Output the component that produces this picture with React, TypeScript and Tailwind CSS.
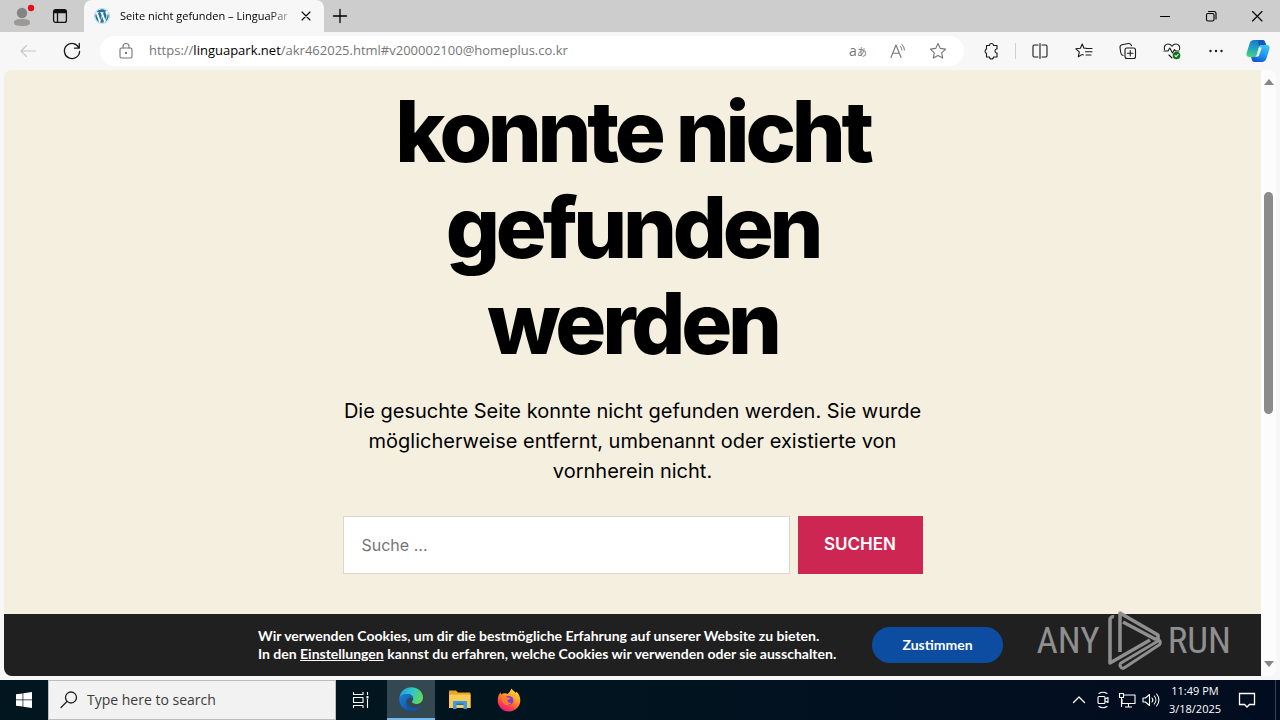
import React from "react";
import { FaWordpress } from "react-icons/fa";

type IconProps = {
  children: React.ReactNode;
  className?: string;
  box?: string;
};

// Thin line icon used all over the browser chrome
function Icon({ children, className = "size-5", box = "0 0 20 20" }: IconProps) {
  return (
    <svg
      viewBox={box}
      className={`shrink-0 ${className}`}
      fill="none"
      stroke="currentColor"
      strokeWidth="1.1"
      strokeLinecap="round"
      strokeLinejoin="round"
      aria-hidden="true"
    >
      {children}
    </svg>
  );
}

function TitleBar() {
  return (
    <header className="flex h-8 shrink-0 items-stretch bg-[#cdcdcd]">
      <button aria-label="Profile" className="ml-3 flex w-6 items-center">
        <svg viewBox="0 0 24 24" className="size-6" aria-hidden="true">
          <circle cx="10" cy="9" r="5.2" fill="#868482" />
          <path d="M2 18.500c0-2.800 3-3.500 8-3.500s8 .7 8 3.500S15 22 10 22s-8-.9-8-3.500z" fill="#9b9998" />
          <circle cx="19" cy="4" r="3.200" fill="#e0101c" />
        </svg>
      </button>
      <button aria-label="Tab actions" className="ml-4 flex w-4 items-center">
        <svg viewBox="0 0 16 16" className="size-4" fill="none" stroke="#111" strokeWidth="1.300" aria-hidden="true">
          <rect x="1.600" y="1.600" width="12.800" height="12.800" rx="2" />
          <path d="M1.600 4.600h12.800M5.500 4.600v9.800" />
          <path d="M2 3h12" strokeWidth="2" />
        </svg>
      </button>
      <div className="ml-4 flex w-60 items-center rounded-t-lg bg-[#f7f7f7] px-[10px]">
        <FaWordpress className="size-4 shrink-0 rounded-full bg-white text-[#21759b]" />
        <span className="ml-[10px] w-[174px] bg-linear-to-r from-black from-86% to-black/15 bg-clip-text text-[11px] whitespace-nowrap text-transparent">
          Seite nicht gefunden – LinguaPar
        </span>
        <button aria-label="Close tab" className="ml-[6px] flex size-4 items-center justify-center">
          <Icon className="size-4" box="0 0 16 16"><path d="M4 4l8 8M12 4l-8 8" /></Icon>
        </button>
      </div>
      <button aria-label="New tab" className="ml-[6px] flex w-5 items-center">
        <Icon className="size-5"><path d="M3.500 10h13M10 3.500v13" strokeWidth="1.300" /></Icon>
      </button>
      <div className="ml-auto flex">
        <button aria-label="Minimize" className="flex w-[46px] items-center justify-center">
          <Icon className="size-4" box="0 0 16 16"><path d="M3.500 8.500h9" /></Icon>
        </button>
        <button aria-label="Restore" className="flex w-[46px] items-center justify-center">
          <Icon className="size-4" box="0 0 16 16">
            <rect x="3.500" y="5.500" width="7.500" height="7.500" rx="1.500" />
            <path d="M5.500 3.500h5.500a2 2 0 0 1 2 2V11" />
          </Icon>
        </button>
        <button aria-label="Close" className="flex w-[46px] items-center justify-center">
          <Icon className="size-4" box="0 0 16 16"><path d="M3.500 3.500l9.500 9.500M13 3.500L3.500 13" /></Icon>
        </button>
      </div>
    </header>
  );
}

function CopilotLogo() {
  return (
    <svg viewBox="0 0 24 24" className="size-6" aria-hidden="true">
      <defs>
        <linearGradient id="cpLeft" x1="0.400" y1="0" x2="0.200" y2="1">
          <stop offset="0" stopColor="#1578cf" />
          <stop offset="0.500" stopColor="#22a5c4" />
          <stop offset="1" stopColor="#45d67c" />
        </linearGradient>
        <linearGradient id="cpRight" x1="0.700" y1="0" x2="0.300" y2="1">
          <stop offset="0" stopColor="#3cc4f2" />
          <stop offset="0.500" stopColor="#1f9aee" />
          <stop offset="1" stopColor="#1450d8" />
        </linearGradient>
      </defs>
      <path d="M12 1h4.500c1.600 0 2.300 1 2.700 2.500L20 6h-4c-2 0-2.800 1.200-3.300 2.800l-2 6.600C10.200 17 9.300 18 7.500 18h-4C.8 18 0 16 .6 14l3-9.500C4.300 2.200 5.700 1 8 1z" fill="url(#cpLeft)" />
      <path d="M12 1h4.500c1.600 0 2.300 1 2.700 2.500L20 6h-4c-1.400 0-2.200.6-2.800 1.600z" fill="#1259b8" />
      <path d="M16.500 6h4c2.700 0 3.500 2 2.900 4l-3 9.500c-.7 2.300-2.100 3.500-4.400 3.500H8.500c-1.600 0-2.300-1-2.700-2.500L5 18h3c2 0 2.800-1.200 3.300-2.800l2-6.400C13.800 7.200 14.700 6 16.500 6z" fill="url(#cpRight)" />
      <path d="M13.200 8.500h2.600l-2.600 7.600c-.4 1.200-1 1.700-2 1.700H9.500c1-.5 1.500-1.400 1.800-2.600z" fill="#f7f7f7" />
    </svg>
  );
}

function Toolbar() {
  return (
    <div className="flex h-[38px] shrink-0 items-center bg-[#f7f7f7] text-[#1b1b1b]">
      <button aria-label="Back" disabled className="ml-[18px] text-[#c4c4c4]">
        <Icon><path d="M17.500 10H3M8.500 4.500L3 10l5.500 5.500" /></Icon>
      </button>
      <button aria-label="Refresh" className="ml-6">
        <Icon>
          <path d="M17 7A7.600 7.600 0 1 0 17.600 10.500M17.300 2.500V7.200h-4.800" strokeWidth="1.300" />
        </Icon>
      </button>
      <div className="ml-[18px] flex h-[30px] min-w-0 flex-1 items-center rounded-full bg-white text-[#767676]">
        <Icon className="ml-4 size-5">
          <rect x="4" y="7" width="12" height="10" rx="1.500" />
          <path d="M7 7V5.500a3 3 0 0 1 6 0V7" />
          <circle cx="10" cy="12" r="0.600" fill="currentColor" />
        </Icon>
        <a href="#top" className="ml-[13px] min-w-0 flex-1 truncate text-[13px]">
          https://<span className="text-black">linguapark.net</span>/akr462025.html#v200002100@homeplus.co.kr
        </a>
        <button aria-label="Translate" className="w-5 text-sm leading-5 whitespace-nowrap">
          a<span className="font-['Noto_Sans_CJK_JP',sans-serif] text-[10px]">あ</span>
        </button>
        <button aria-label="Read aloud" className="ml-5">
          <Icon>
            <path d="M3 16.500L8 4l5 12.500M4.800 12.300h6.500" />
            <path d="M12.500 5.500a5 5 0 0 1 1.500 3.500M14 3.500a8 8 0 0 1 2.500 5.500" strokeWidth="1" />
          </Icon>
        </button>
        <button aria-label="Add to favorites" className="mr-4 ml-5">
          <Icon>
            <path d="M10 2.500l2.300 4.900 5.300.7-3.900 3.700 1 5.300L10 14.500l-4.700 2.600 1-5.300L2.400 8.100l5.300-.7z" />
          </Icon>
        </button>
      </div>
      <div className="ml-[18px] flex items-center">
        <button aria-label="Extensions">
          <Icon>
            <path d="M4.500 4.500h3a2 2 0 0 1 4 0h3.500V8h-.6a2.100 2.100 0 0 0 0 4h.6v4h-3.500a2 2 0 0 1-4 0h-3v-3.500a2.500 2.500 0 0 1 0-4.500z" />
          </Icon>
        </button>
        <span className="ml-[13px] h-4 w-px bg-[#cfcfcf]" />
        <button aria-label="Split screen" className="ml-[14px]">
          <Icon>
            <path d="M8 4H4.500A1.500 1.500 0 0 0 3 5.500v9A1.500 1.500 0 0 0 4.500 16H8M12 4h3.500A1.500 1.500 0 0 1 17 5.500v9a1.500 1.500 0 0 1-1.500 1.500H12M10 2.500v15" />
          </Icon>
        </button>
        <button aria-label="Favorites" className="ml-6">
          <Icon>
            <path d="M12.500 7.300H10L8.200 3 6.400 7.300l-4.600.5 3.500 3-1 5L8.300 13.400l1 .6M12.500 7.500H18M11.500 10.800H18M12 14h5" />
          </Icon>
        </button>
        <button aria-label="Collections" className="ml-6">
          <Icon>
            <rect x="7" y="7" width="10.500" height="10.500" rx="2" />
            <path d="M12.250 9.500v5.500M9.500 12.250h5.500M5 14.500C3.500 14 3 13 2.700 11.500L2 6.500C1.900 5 2.700 4 4 3.700l6.500-1.200c1.600-.2 2.600.7 3 2.200" />
          </Icon>
        </button>
        <button aria-label="Browser essentials" className="ml-6">
          <Icon>
            <path d="M10 17l-3-3M2.500 8.500C1.500 5 4 3 6 3c1.800 0 3 .8 4 2.200C11 3.800 12.200 3 14 3c2.500 0 4.500 2.500 3.500 5.500M2 10h4l1.800-3 2.700 5 2-3.500 1 1.500H17" />
            <circle cx="14.500" cy="14.500" r="3.800" fill="#12731a" stroke="none" />
            <path d="M13 14.700l1.100 1 2-2.200" stroke="#fff" />
          </Icon>
        </button>
        <button aria-label="Settings and more" className="ml-6">
          <Icon>
            <g fill="currentColor" stroke="none">
              <circle cx="4.500" cy="10" r="1.200" />
              <circle cx="10" cy="10" r="1.200" />
              <circle cx="15.500" cy="10" r="1.200" />
            </g>
          </Icon>
        </button>
        <button aria-label="Copilot" className="mr-[10px] ml-5">
          <CopilotLogo />
        </button>
      </div>
    </div>
  );
}

function NotFound() {
  return (
    <main className="mx-auto w-full max-w-[580px] pt-[14px] text-center font-['Inter',sans-serif] text-black">
      <h1 className="text-[85px] leading-[96px] font-extrabold tracking-tighter">
        konnte nicht gefunden werden
      </h1>
      <p className="mt-6 text-xl leading-[30px]">
        Die gesuchte Seite konnte nicht gefunden werden. Sie wurde möglicherweise entfernt, umbenannt oder
        existierte von vornherein nicht.
      </p>
      <form className="mt-[30px] flex gap-2" onSubmit={(e) => e.preventDefault()}>
        <input
          aria-label="Suche"
          type="search"
          placeholder="Suche …"
          className="h-[58px] min-w-0 flex-1 border border-[#dcd7ca] bg-white px-[18px] text-base placeholder:text-[#757575]"
        />
        <button className="h-[58px] w-[125px] bg-[#cd2653] text-[17px] font-semibold text-white">SUCHEN</button>
      </form>
    </main>
  );
}

function Watermark() {
  return (
    <div className="absolute right-[30px] bottom-1 flex items-center gap-1 font-['Roboto_Condensed','Liberation_Sans_Narrow','Roboto',sans-serif] text-[37px] leading-[60px] font-normal text-[#8f8f8f]">
      <span>ANY</span>
      <svg viewBox="0 0 60 62" className="h-[62px] w-[60px]" fill="none" stroke="#8f8f8f" strokeWidth="3.500" strokeLinejoin="round" aria-hidden="true">
        <path d="M16 42V3l38 22a3 3 0 0 1-3 4L19 12" />
        <path d="M10 7a3 3 0 0 0-4 3v43l40-23" />
        <path d="M54 28v3L17 53a3 3 0 0 0 3 5l35-23a3 3 0 0 0 0-5z" strokeWidth="3" />
      </svg>
      <span>RUN</span>
    </div>
  );
}

function CookieBar() {
  return (
    <section
      aria-label="Cookies"
      className="absolute inset-x-0 bottom-0 flex h-[62px] items-center rounded-bl-lg bg-[#202020] font-['Lato',sans-serif] text-sm leading-[18px] font-bold text-white"
    >
      <p className="ml-[254px] w-[614px]">
        Wir verwenden Cookies, um dir die bestmögliche Erfahrung auf unserer Website zu bieten.
        <br />
        In den <a href="#settings" className="underline">Einstellungen</a> kannst du erfahren, welche Cookies wir verwenden oder sie ausschalten.
      </p>
      <button className="h-9 w-[131px] rounded-full bg-[#0c4da2]">Zustimmen</button>
      <Watermark />
    </section>
  );
}

function Scrollbar() {
  return (
    <div className="flex w-[15px] shrink-0 flex-col items-center rounded-r-lg bg-[#fcfcfc] py-2">
      <svg viewBox="0 0 10 8" className="h-2 w-[10px]" aria-hidden="true"><path d="M0 7l5-6 5 6z" fill="#858585" /></svg>
      <div className="mt-[106px] h-[222px] w-[9px] rounded-full bg-[#8b8b8b]" />
      <svg viewBox="0 0 10 8" className="mt-auto h-2 w-[10px]" aria-hidden="true"><path d="M0 1l5 6 5-6z" fill="#858585" /></svg>
    </div>
  );
}

function EdgeLogo() {
  return (
    <svg viewBox="0 0 24 24" className="size-6" aria-hidden="true">
      <defs>
        <linearGradient id="edgeTop" x1="0" y1="0.300" x2="1" y2="0.600">
          <stop offset="0" stopColor="#1fa0dd" />
          <stop offset="0.500" stopColor="#33c5c9" />
          <stop offset="1" stopColor="#66d94f" />
        </linearGradient>
        <linearGradient id="edgeLow" x1="0" y1="0" x2="1" y2="1">
          <stop offset="0" stopColor="#1b7fd4" />
          <stop offset="1" stopColor="#0f4ea6" />
        </linearGradient>
      </defs>
      <path d="M.3 11C1 4.600 6 .2 12.200.2 19 .2 24 5 24 10.500c0 4-3 6.500-6.500 6.500-3 0-4.500-1.300-4.500-2.200 0-.7 1.200-1.200 1.200-3.300 0-2.500-2.600-4.600-6-4.600C4.700 6.900 1.700 8.500.3 11z" fill="url(#edgeTop)" />
      <path d="M.2 12C.6 8.500 4 6.900 8.200 6.900c3.400 0 6 2.100 6 4.600-4-2.200-7.300.8-7.300 4.500 0 4.200 3.500 7.500 7.300 7.600C7 25 .2 20 .2 12z" fill="url(#edgeLow)" />
      <path d="M10.300 10.800c-3.200 1.800-3.200 6 0 8.500 3.600 2.800 8.600 1.900 11.900-.6-1.700 3-5 5.200-8.500 5-3.800-.3-6.800-3.700-6.800-7.700 0-2.500 1.500-4.500 3.400-5.200z" fill="#1155b0" />
    </svg>
  );
}

function FolderLogo() {
  return (
    <svg viewBox="0 0 24 24" className="size-6" aria-hidden="true">
      <path d="M1 3.500c0-.6.400-1 1-1h6l2 2h11.500c.6 0 1 .4 1 1V20H1z" fill="#e8a424" />
      <path d="M1 6.500h21.500V20H1z" fill="#fbcb57" />
      <path d="M5 21v-6.500c0-.8.500-1.500 1.500-1.500h11c1 0 1.500.7 1.500 1.500V21h-3.500v-4h-7v4z" fill="#3c9be0" />
      <path d="M8.500 17h7v-1.500h-7z" fill="#1d70b5" />
    </svg>
  );
}

function FirefoxLogo() {
  return (
    <svg viewBox="0 0 24 24" className="size-6" aria-hidden="true">
      <defs>
        <linearGradient id="ffBody" x1="0.800" y1="0" x2="0.250" y2="1">
          <stop offset="0" stopColor="#ffe34a" />
          <stop offset="0.400" stopColor="#ff9a22" />
          <stop offset="0.750" stopColor="#ff3f4b" />
          <stop offset="1" stopColor="#e4148c" />
        </linearGradient>
      </defs>
      <path d="M14.500.5c1 2 3 2.800 4.300 4.500.4-.4.500-1 .4-1.600C22 5.500 23.300 9 23.300 12.300c0 6.300-5 11.200-11.300 11.200S.7 18.700.7 12.500C.7 9 1.800 6.300 3.600 4.300c0 1 .2 1.700.7 2.300 1-.9 2-1.300 3.400-1.300 1.300 0 2 .3 2.800.8 1.400-1.200 3-3 4-5.600z" fill="url(#ffBody)" />
      <circle cx="11.800" cy="12.500" r="4.600" fill="#7b3fd6" />
      <path d="M5 9.200c2-1.200 4-1 5.500.2l3 .3c-.2 1.200-1.200 1.700-2.800 2.200-.6 2.200 1.500 3.400 3.600 2.600-1 2.800-5.200 3.500-7.500 1-1.700-1.800-2.200-4-1.800-6.300z" fill="#ff7a2c" />
    </svg>
  );
}

function Taskbar() {
  return (
    <footer className="flex h-10 shrink-0 items-stretch bg-linear-to-r from-[#02161f] from-30% to-[#020c20] text-white">
      <button aria-label="Start" className="flex w-12 items-center justify-center">
        <svg viewBox="0 0 16 16" className="size-4" fill="#fff" aria-hidden="true">
          <path d="M0 2.300l6.600-.9v6.200H0zM7.300 1.300L16 0v7.600H7.300zM0 8.300h6.600v6.300L0 13.700zM7.300 8.300H16V16l-8.700-1.300z" />
        </svg>
      </button>
      <label className="flex w-72 items-center border border-[#bdbdbd] bg-[#f2f2f2] pl-[10px] text-[#222]">
        <Icon className="size-5">
          <circle cx="12" cy="7.500" r="5.500" strokeWidth="1.300" />
          <path d="M8 11.500L2 17.500" strokeWidth="1.300" />
        </Icon>
        <input
          aria-label="Search"
          placeholder="Type here to search"
          className="ml-2 min-w-0 flex-1 bg-transparent text-sm placeholder:text-[#3c3c3c]"
        />
      </label>
      <button aria-label="Task view" className="flex w-[51px] items-center justify-center">
        <Icon className="size-5">
          <path d="M1.500 2v2.500H11V2M1.500 18v-2.500H11V18M1.500 7.500H11v5H1.500zM15.500 2v3M15.500 9v9" strokeLinecap="butt" />
          <path d="M14.500 6h2v2.500h-2z" fill="currentColor" stroke="none" />
        </Icon>
      </button>
      <button aria-label="Microsoft Edge" className="flex w-12 items-center justify-center border-b-2 border-[#76b9ed] bg-[#334850]">
        <EdgeLogo />
      </button>
      <button aria-label="File Explorer" className="flex w-[49px] items-center justify-center">
        <FolderLogo />
      </button>
      <button aria-label="Firefox" className="flex w-[49px] items-center justify-center">
        <FirefoxLogo />
      </button>
      <div className="ml-auto flex items-center">
        <button aria-label="Hidden icons" className="mr-1">
          <Icon><path d="M4.500 12.500L10 7l5.500 5.500" strokeWidth="1.300" /></Icon>
        </button>
        <button aria-label="Camera" className="mr-1">
          <Icon>
            <rect x="5" y="6.500" width="7" height="7" rx="1" />
            <path d="M12 9l3-1.500v5L12 11M6 3.500c2.500-1.500 5.500-1.500 8 0M6 16.500c2.500 1.500 5.500 1.500 8 0" />
          </Icon>
        </button>
        <button aria-label="Network" className="mr-1">
          <Icon>
            <path d="M6.500 5H18v8.500H5V9M11.500 13.500V17M8 17h7M2.500 3.500h4V7.500h-4zM4.500 7.500V17" strokeLinecap="butt" />
          </Icon>
        </button>
        <button aria-label="Volume">
          <Icon>
            <path d="M2 8h2.500L8.500 4.500v11L4.500 12H2zM11 8a3 3 0 0 1 0 4M13.300 6a6 6 0 0 1 0 8M15.600 4a9 9 0 0 1 0 12" />
          </Icon>
        </button>
        <div className="ml-1 w-15 text-center text-[11px] leading-[18px] whitespace-nowrap">
          <div>11:49 PM</div>
          <div>3/18/2025</div>
        </div>
        <button aria-label="Notifications" className="mr-[18px] ml-3">
          <Icon><path d="M2.500 3.500h15v11h-5L10 17l-2.500-2.500h-5z" strokeWidth="1.300" strokeLinejoin="miter" /></Icon>
        </button>
        <span className="mr-1 h-10 w-px bg-[#3a4552]" />
      </div>
    </footer>
  );
}

export default function App() {
  return (
    <div className="flex h-screen flex-col overflow-hidden bg-[#f7f7f7] font-['Open_Sans','Noto_Sans',sans-serif]">
      <TitleBar />
      <Toolbar />
      <div className="mx-1 mb-1 flex min-h-0 flex-1">
        <div className="relative min-w-0 flex-1 rounded-l-lg bg-[#f5efe0]">
          <NotFound />
          <CookieBar />
        </div>
        <Scrollbar />
      </div>
      <Taskbar />
    </div>
  );
}
